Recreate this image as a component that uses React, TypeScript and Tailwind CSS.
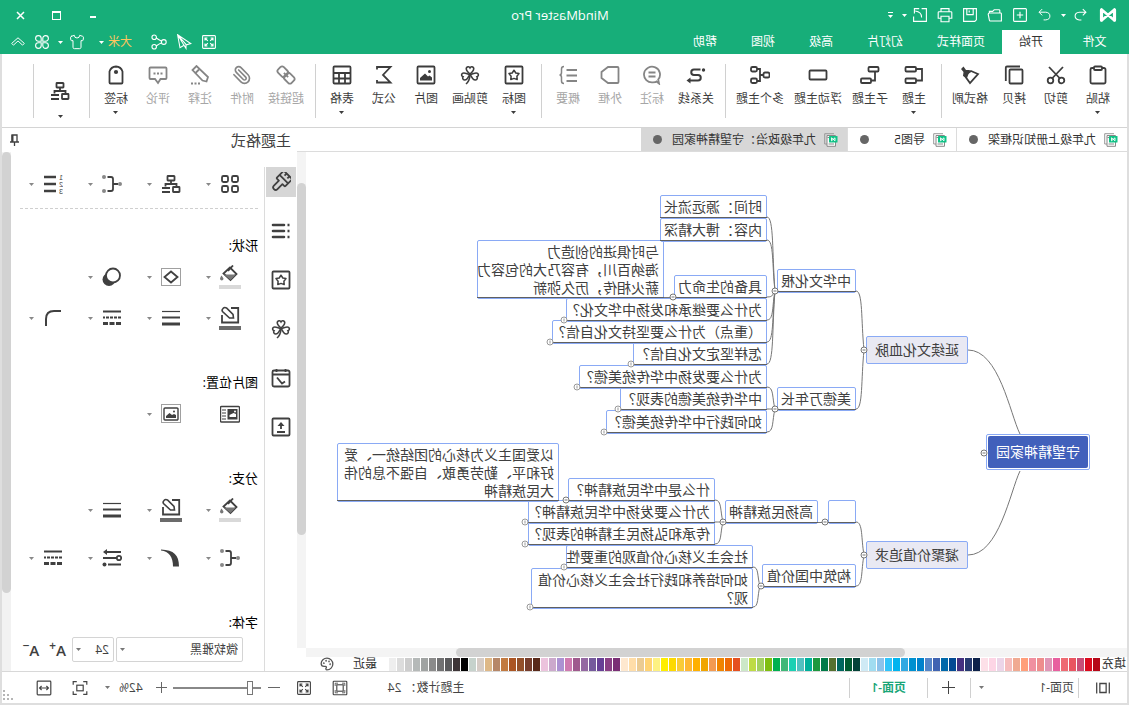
import React from 'react';
import { Palette, Paperclip, Shirt } from 'lucide-react';

interface SvgProps {
  children: React.ReactNode;
  size?: number;
  stroke?: number;
}

const Svg: React.FC<SvgProps> = ({ children, size = 20, stroke = 1.8 }) => (
  <svg
    width={size}
    height={size}
    viewBox="0 0 20 20"
    fill="none"
    stroke="currentColor"
    strokeWidth={stroke}
    className="shrink-0"
    aria-hidden="true"
  >
    {children}
  </svg>
);

const Caret: React.FC<{ className?: string }> = ({ className = '' }) => (
  <svg width="5" height="3" viewBox="0 0 5 3" className={`shrink-0 ${className}`} aria-hidden="true">
    <path d="M0 0H5L2.5 3Z" fill="currentColor" />
  </svg>
);

const star = 'M10 5.2L11.8 8L15 8.600L12.900 11.200L13.200 14.600L10 13.400L6.800 14.600L7.100 11.200L5 8.600L8.200 8Z';

const cloverShape = (
  <g strokeWidth="1.6">
    <path d="M10 9C7 6.500 5.500 4.500 6.500 2.700C7.500 1.200 9.300 1.500 10 2.800C10.700 1.500 12.500 1.200 13.500 2.700C14.500 4.500 13 6.500 10 9Z" />
    <path d="M9.500 9.500C6 8 3.500 7.200 2.200 8.500C1 10 1.800 11.500 3 11.800C2.200 13 2.800 14.800 4.500 15C6.700 15 8.300 13 9.500 9.500Z" />
    <path d="M10.500 9.500C14 8 16.500 7.200 17.800 8.500C19 10 18.200 11.500 17 11.800C17.800 13 17.200 14.800 15.500 15C13.300 15 11.700 13 10.500 9.500Z" />
    <path d="M10 10C10.300 14 11.500 17 14 19" />
  </g>
);

const treeShape = (
  <>
    <rect x="6.500" y="2" width="7" height="4.500" rx="0.500" />
    <path d="M10 6.500V10M4.500 13V10H15.500V12.500" />
    <rect x="1.500" y="13" width="6.500" height="5" rx="0.500" />
    <path d="M11 14H19M11 18H19" />
  </>
);

const bracketShape = (
  <>
    <path d="M4 10H9M14.500 3H11Q9 3 9 5V15Q9 17 11 17H14.500" />
    <g fill="#888" stroke="none">
      <circle cx="2" cy="10" r="2" />
      <circle cx="18" cy="3" r="2" />
      <circle cx="18" cy="17" r="2" />
    </g>
  </>
);

const imageShape = (
  <>
    <rect x="1.500" y="1.500" width="17" height="17" rx="1" />
    <path d="M4 15.500V12.500L6.500 10.500L8 11.500L11 8.500L16 13V15.500Z" fill="currentColor" stroke="none" />
    <circle cx="6.500" cy="6.500" r="1.500" fill="currentColor" stroke="none" />
  </>
);

const bucketShape = (
  <>
    <path d="M10 2.500L16.500 8.500L9.500 15L3.500 9Z" />
    <path d="M4 9.500H16L9.500 15Z" fill="#777" stroke="none" />
    <path d="M12 6L7 .5" />
    <path d="M18.500 10.500C19.500 12 20 13 20 14A1.800 1.800 0 0 1 16.500 14C16.500 13 17.500 12 18.500 10.500Z" fill="#777" stroke="none" />
  </>
);

const penBoxShape = (
  <>
    <path d="M9 2H1.800V16.500H18V9" />
    <path d="M6.500 12L7 8.500L13.500 2Q15.500 .8 17 2.500Q18.500 4 17.500 5.500L10.500 12Z" strokeWidth="1.600" />
  </>
);

const dashesShape = (
  <>
    <path d="M1 3.500H19" strokeWidth="2" />
    <path d="M1 9.500H19" strokeWidth="2" strokeDasharray="3 1" />
    <path d="M1 15.500H19" strokeWidth="3" strokeDasharray="5 1.500" />
  </>
);

const weightsShape = (
  <>
    <path d="M1 3.500H19" strokeWidth="1.200" />
    <path d="M1 9.500H19" strokeWidth="2" />
    <path d="M1 16H19" strokeWidth="3" />
  </>
);

const expandShape = (
  <>
    <rect x="2" y="2" width="16" height="16" rx="1" />
    <path d="M5 8V5H8M5 5L8.500 8.500M15 8V5H12M15 5L11.500 8.500M5 12V15H8M5 15L8.500 11.500M15 12V15H12M15 15L11.500 11.500" />
  </>
);

const icons: Record<string, React.ReactNode> = {
  paste: (
    <>
      <rect x="2.500" y="3" width="15" height="15.500" rx="1.500" />
      <rect x="6" y="1.500" width="8" height="3.500" rx="1" fill="#fff" />
    </>
  ),
  cut: (
    <>
      <circle cx="4.500" cy="15.500" r="2.800" />
      <circle cx="15.500" cy="15.500" r="2.800" />
      <path d="M3 2L14 13.500M17 2L6 13.500" />
    </>
  ),
  copy: (
    <>
      <rect x="1.500" y="4.500" width="13" height="14" rx="1" />
      <path d="M4 1.500H17Q18.200 1.500 18.200 2.700V16" />
    </>
  ),
  brush: (
    <>
      <path d="M9 6L2 9L10 18L15.500 10.500Z" />
      <path d="M10 5L14 5L16.500 1.500L19 4L16.500 7L17 11L13 13Z" fill="currentColor" stroke="none" />
    </>
  ),
  topic: (
    <>
      <rect x="8" y="2" width="10.500" height="4.500" rx="1" />
      <rect x="8" y="13.500" width="10.500" height="4.500" rx="1" />
      <path d="M8 4H2V15.500H8" />
    </>
  ),
  subtopic: (
    <>
      <rect x="1.500" y="2" width="10" height="4.500" rx="1" />
      <rect x="9" y="13.500" width="10" height="4.500" rx="1" />
      <path d="M5 6.500V15.500H9" />
    </>
  ),
  floating: <rect x="1.500" y="5.500" width="17" height="9" rx="1" />,
  multi: (
    <>
      <rect x="0.500" y="7.500" width="6" height="5" rx="1.500" />
      <rect x="13" y="2" width="6" height="4.500" rx="1.500" />
      <rect x="13" y="13.500" width="6" height="4.500" rx="1.500" />
      <path d="M6.500 10H10M13 4H10V16H13" />
    </>
  ),
  relation: (
    <>
      <path d="M5.500 4.500H12A2.700 2.700 0 0 1 12 10H8A2.700 2.700 0 0 0 8 15.500H16" strokeWidth="2" />
      <circle cx="2.500" cy="5" r="1.700" fill="currentColor" stroke="none" />
      <path d="M15.500 12.500L19.500 15.500L15.500 18.500Z" fill="currentColor" stroke="none" />
    </>
  ),
  callout: (
    <>
      <path d="M3 18.500L3.800 14.500A8 7.800 0 1 1 9 17.300Q6 17.300 5.500 16.500Z" />
      <path d="M6.500 7.500H13.500M6.500 11.500H13.500" />
    </>
  ),
  frame: <path d="M2.500 2H12L18.500 7V13L12 18H2.500Q1.500 18 1.500 17V3Q1.500 2 2.500 2Z" />,
  summary: (
    <>
      <path d="M1 5H11.500M1 10.500H11.500M1 16H11.500" />
      <path d="M14 1.500Q16.500 1.500 16.500 4V7.500Q16.500 10 18.500 10Q16.500 10 16.500 12.500V16Q16.500 18.500 14 18.500" strokeWidth="1.500" />
    </>
  ),
  mark: (
    <>
      <rect x="1.500" y="1.500" width="17" height="17" rx="1" />
      <path d={star} strokeWidth="1.500" strokeLinejoin="round" />
    </>
  ),
  clover: cloverShape,
  image: imageShape,
  sigma: <path d="M17 4.500V2H3.500L11 10L3.500 17.500H17V15" />,
  table: (
    <>
      <rect x="1.500" y="1.500" width="17" height="17" rx="1" />
      <path d="M1.500 8H18.500M1.500 13.500H18.500M7 8V18.500M13 8V18.500" />
    </>
  ),
  link: (
    <g transform="rotate(45 10 10)">
      <rect x="6" y="0.500" width="8" height="10" rx="2.500" />
      <rect x="6" y="9.500" width="8" height="10" rx="2.500" />
      <path d="M10 7V13" />
    </g>
  ),
  note: (
    <>
      <path d="M2 13L3.500 17.500L7.500 16.500L17.500 6L13.500 2Z" transform="translate(0 -1)" />
      <path d="M11 4.500L15 8.500" />
      <path d="M10 18.500H19" strokeDasharray="2 1.500" />
    </>
  ),
  comment: (
    <>
      <path d="M2.500 2.500H17.500Q18.500 2.500 18.500 3.500V13Q18.500 14 17.500 14H13L10 18L7.500 14H2.500Q1.500 14 1.500 13V3.500Q1.500 2.500 2.500 2.500Z" />
      <path d="M5.500 8.500H15" strokeDasharray="2 1.500" />
    </>
  ),
  tag: (
    <>
      <path d="M3.500 17.500V6.500Q5 1.800 10 1.500Q15 1.800 16.500 6.500V17.500Q16.500 18.500 15.500 18.500H4.500Q3.500 18.500 3.500 17.500Z" />
      <circle cx="10" cy="7" r="2.100" fill="currentColor" stroke="none" />
    </>
  ),
  tree: treeShape,
  grid: (
    <>
      <rect x="2" y="2" width="6" height="6" rx="1.500" />
      <rect x="12" y="2" width="6" height="6" rx="1.500" />
      <rect x="2" y="12" width="6" height="6" rx="1.500" />
      <rect x="12" y="12" width="6" height="6" rx="1.500" />
    </>
  ),
  bracket: bracketShape,
  numbering: (
    <>
      <path d="M7 3H19M7 10H19M7 17H19" strokeWidth="2.600" />
      <g fill="currentColor" stroke="none" fontSize="7" fontFamily="Liberation Sans">
        <text x="0" y="6">1</text>
        <text x="0" y="13">2</text>
        <text x="0" y="20">3</text>
      </g>
    </>
  ),
  bucket: bucketShape,
  diamond: (
    <>
      <rect x="0.500" y="1.500" width="19" height="17" strokeWidth="1" strokeDasharray="1 1" />
      <path d="M10 4.500L16.500 10L10 15.500L3.500 10Z" />
    </>
  ),
  shadow: (
    <>
      <circle cx="13" cy="12.500" r="6.500" fill="currentColor" stroke="none" />
      <circle cx="9" cy="8.500" r="7" fill="#fff" />
    </>
  ),
  penBox: penBoxShape,
  weights: weightsShape,
  dashes: dashesShape,
  corner: <path d="M2 3H9Q17 3 17 11V18" strokeWidth="2" />,
  textImage: (
    <>
      <rect x="0.500" y="2.500" width="19" height="15.500" rx="1" strokeWidth="1.400" />
      <rect x="2.500" y="5" width="10" height="10.500" fill="currentColor" stroke="none" />
      <path d="M4 13V10L6.500 9L10.500 11V13Z" fill="#fff" stroke="none" />
      <circle cx="5" cy="7.500" r="1" fill="#fff" stroke="none" />
      <path d="M14 6H18M14 9H18M14 12H18M14 15H18" strokeWidth="1.100" />
    </>
  ),
  dottedImage: (
    <>
      <rect x="0.500" y="0.500" width="19" height="18" strokeWidth="1" strokeDasharray="1 1" />
      <rect x="3" y="4" width="14" height="12" rx="1" strokeWidth="1.400" />
      <path d="M5 14V11L7 10L9 11L11.500 9L15 12V14Z" fill="currentColor" stroke="none" />
      <circle cx="7" cy="7.500" r="1" fill="currentColor" stroke="none" />
    </>
  ),
  taper: <path d="M20 1.500C7 2 2 7 2 18.500H8C8 9 12 3.500 20 2.500Z" fill="currentColor" stroke="none" />,
  arrows: (
    <>
      <path d="M1 4H16M5 10H19M1 16.500H14" strokeWidth="2" />
      <path d="M15 1L19 4L15 7Z" fill="currentColor" stroke="none" />
      <circle cx="3" cy="10" r="2.200" />
      <circle cx="17.500" cy="16.500" r="2" fill="currentColor" stroke="none" />
    </>
  ),
  format: (
    <g transform="rotate(-45 10 10)" strokeLinejoin="round">
      <path d="M4 0H16V9.500Q16 10.500 15 10.500H12.500V17.500Q12.500 20 10 20Q7.500 20 7.500 17.500V10.500H5Q4 10.500 4 9.500Z" />
      <path d="M4 6H16M8 0V3M12 0V3" />
    </g>
  ),
  outline: (
    <>
      <path d="M7 4H18M7 10H18M7 16H18" strokeWidth="2.600" strokeLinecap="round" />
      <path d="M1.500 4H3.500M1.500 10H3.500M1.500 16H3.500" strokeWidth="2.400" />
    </>
  ),
  task: (
    <>
      <rect x="1.500" y="2.500" width="17" height="16" rx="1.500" />
      <path d="M1.500 6.500H18.500M5.500 1V4M14.500 1V4M6 13.500L9 15.500L14 9.500" />
    </>
  ),
  upload: (
    <>
      <rect x="1.500" y="1.500" width="17" height="17" rx="1" />
      <path d="M10 12V6M6 15H14" />
      <path d="M6.500 9L10 5L13.500 9Z" fill="currentColor" stroke="none" />
    </>
  ),
  undo: <path d="M6 1.500L1.500 6L6 10.500M1.500 6H11Q17 6.500 17 11.500Q17 16.500 11 17H8" />,
  redo: <path d="M14 1.500L18.500 6L14 10.500M18.500 6H9Q3 6.500 3 11.500Q3 16.500 9 17H12" />,
  add: (
    <>
      <rect x="2" y="2" width="16" height="16" rx="1" />
      <path d="M10 6V14M6 10H14" />
    </>
  ),
  open: <path d="M2 17.500V8.500Q2 7.500 3 7.500H17Q18.500 7.500 18.500 9L17 16.500Q16.800 17.500 16 17.500H2ZM4 7.500V4.500Q4 3.500 5 3.500H11L13 5.500H17V7.500" />,
  save: <path d="M2 2H18V18H4L2 16ZM6 2V9.500H14V2M11 4.500V7" />,
  print: <path d="M5 6V2H15V6M5 14H1.500V7Q1.500 6 2.500 6H17.500Q18.500 6 18.500 7V14H15M5 11.500H15V18.500H5Z" />,
  share: <path d="M8 2H2V18H18V12M8 13Q8 6 16 5M11 2H17V8" />,
  nodes: (
    <>
      <circle cx="4" cy="10" r="3" />
      <circle cx="16" cy="4" r="2.800" />
      <circle cx="16" cy="16" r="2.800" />
      <path d="M6.500 9Q10 7.500 13.500 5M6.500 11Q10 12.500 13.500 15" />
    </>
  ),
  send: <path d="M18 1L1.500 12L7 13.500L18 1L15 17L10 14L7.500 18V13.500M18 1L10 14" />,
  expand: expandShape,
  fourLeaf: (
    <path d="M9 9H5.500A3.500 3.500 0 1 1 9 5.500ZM11 9V5.500A3.500 3.500 0 1 1 14.500 9ZM9 11V14.500A3.500 3.500 0 1 1 5.500 11ZM11 11H14.500A3.500 3.500 0 1 1 11 14.500Z" />
  ),
  collapse: <path d="M1 12L10 4L19 12L16.500 14.500L10 8.500L3.500 14.500Z" />,
  page: <path d="M3 4V16M17 4V16M6.500 5H13.500V15H6.500Z" />,
  fitFrame: (
    <>
      <rect x="1.500" y="1.500" width="17" height="17" rx="1" />
      <rect x="6" y="6" width="8" height="8" />
      <path d="M4 7.500V4H7.500M12.500 4H16V7.500M16 12.500V16H12.500M7.500 16H4V12.500" strokeWidth="1" />
    </>
  ),
  fitPage: (
    <>
      <rect x="6" y="6.500" width="8" height="7" />
      <path d="M1.500 6V2H6M14 2H18.500V6M18.500 14V18H14M6 18H1.500V14" />
    </>
  ),
  fitWidth: (
    <>
      <rect x="1.500" y="1.500" width="17" height="17" rx="1" />
      <path d="M4.500 10H15.500M7 7.500L4.500 10L7 12.500M13 7.500L15.500 10L13 12.500" />
    </>
  ),
};

const Logo = () => (
  <svg width="18" height="16" viewBox="0 0 18 16" fill="none" stroke="#fff" aria-hidden="true">
    <path d="M2.500 2.500V13.500L15.500 2.500V13.500Z" strokeWidth="2.600" strokeLinejoin="round" />
    <path d="M2.500 3V13M15.500 3V13" strokeWidth="3.200" strokeLinecap="round" />
  </svg>
);

const DocIcon = () => (
  <svg width="14" height="14" viewBox="0 0 14 14" fill="none" className="shrink-0" aria-hidden="true">
    <path d="M4 .7H13.300V11H11" stroke="#999" />
    <path d="M2.500 2.500H11V13.300H2.500Z" fill="#fff" stroke="#888" />
    <path d="M4 11H9.500M9 4.500H10.500" stroke="#888" />
    <rect x="0.500" y="3" width="8.500" height="6.500" rx="0.500" fill="#10c286" />
    <path d="M3 4.800V7.800L6.500 4.800V7.800Z" stroke="#fff" strokeWidth="0.900" />
  </svg>
);

const menus = ['页面样式', '幻灯片', '高级', '视图', '帮助'];
const quickActions = [
  ['redo', '重做'],
  ['add', '新建'],
  ['open', '打开'],
  ['save', '保存'],
  ['print', '打印'],
  ['share', '导出'],
];

const TitleBar = () => (
  <header className="bg-[#17ae79] text-white">
    <div className="flex h-[30px] items-center">
      <div className="flex flex-1 items-center pl-3">
        <span className="w-[27px]">
          <Logo />
        </span>
        <button className="flex w-5 justify-center" aria-label="撤销">
          <Svg size={14} stroke={1.5}>{icons.undo}</Svg>
        </button>
        <button className="flex w-3 justify-center" aria-label="撤销选项">
          <Caret />
        </button>
        {quickActions.map(([icon, label]) => (
          <button key={icon} className="flex w-[25px] justify-center" aria-label={label}>
            <Svg size={icon === 'redo' ? 14 : 16} stroke={1.4}>{icons[icon]}</Svg>
          </button>
        ))}
        <button className="flex w-[7px] justify-center" aria-label="导出选项">
          <Caret />
        </button>
        <button className="ml-2 flex flex-col items-center gap-[2px]" aria-label="自定义">
          <span className="h-px w-[5px] bg-white" />
          <Caret />
        </button>
      </div>
      <h1 className="text-[13px] leading-4">MindMaster Pro</h1>
      <div className="flex flex-1 justify-end pr-[3px]">
        <button className="flex h-6 w-9 items-center justify-center" aria-label="最小化">
          <span className="mt-1 h-[2px] w-[6px] bg-white" />
        </button>
        <button className="flex h-6 w-9 items-center justify-center" aria-label="最大化">
          <span className="h-[9px] w-[9px] border border-t-2 border-white" />
        </button>
        <button className="flex h-6 w-9 items-center justify-center" aria-label="关闭">
          <svg width="9" height="9" viewBox="0 0 9 9" stroke="#fff" strokeWidth="1.500">
            <path d="M1 1L8 8M8 1L1 8" />
          </svg>
        </button>
      </div>
    </div>
    <div className="flex h-6 items-center">
      <nav className="flex flex-1 self-stretch text-xs">
        <button className="w-[69px]">文件</button>
        <button className="bg-white px-[17px] text-[#333]">开始</button>
        {menus.map((menu) => (
          <button key={menu} className="px-[17px]">
            {menu}
          </button>
        ))}
      </nav>
      <div className="flex items-center pr-[11px] text-xs">
        <button className="flex w-[25px] justify-center" aria-label="全屏">
          <Svg size={16} stroke={1.4}>{icons.expand}</Svg>
        </button>
        <button className="flex w-[25px] justify-center" aria-label="发送">
          <Svg size={16} stroke={1.3}>{icons.send}</Svg>
        </button>
        <button className="mr-[14px] flex w-[25px] justify-center" aria-label="分享">
          <Svg size={16} stroke={1.4}>{icons.nodes}</Svg>
        </button>
        <button className="flex items-center gap-1 text-[#fcc55f]">
          大米
          <Caret className="text-white" />
        </button>
        <button className="ml-[14px] flex items-center gap-[6px]" aria-label="主题">
          <Shirt size={16} strokeWidth={1.5} />
          <Caret />
        </button>
        <button className="ml-2 mr-[9px]" aria-label="应用">
          <Svg size={16} stroke={1.4}>{icons.fourLeaf}</Svg>
        </button>
        <button aria-label="收起功能区">
          <Svg size={14} stroke={1.4}>{icons.collapse}</Svg>
        </button>
      </div>
    </div>
  </header>
);

interface Tool {
  icon: string;
  label: string;
  menu?: boolean;
  disabled?: boolean;
}

const toolGroups: Tool[][] = [
  [
    { icon: 'paste', label: '粘贴', menu: true },
    { icon: 'cut', label: '剪切' },
    { icon: 'copy', label: '拷贝' },
    { icon: 'brush', label: '格式刷' },
  ],
  [
    { icon: 'topic', label: '主题', menu: true },
    { icon: 'subtopic', label: '子主题' },
    { icon: 'floating', label: '浮动主题' },
    { icon: 'multi', label: '多个主题' },
  ],
  [
    { icon: 'relation', label: '关系线' },
    { icon: 'callout', label: '标注', disabled: true },
    { icon: 'frame', label: '外框', disabled: true },
    { icon: 'summary', label: '概要', disabled: true },
  ],
  [
    { icon: 'mark', label: '图标', menu: true },
    { icon: 'clover', label: '剪贴画' },
    { icon: 'image', label: '图片' },
    { icon: 'sigma', label: '公式' },
    { icon: 'table', label: '表格', menu: true },
  ],
  [
    { icon: 'link', label: '超链接', disabled: true },
    { icon: 'clip', label: '附件', disabled: true },
    { icon: 'note', label: '注释', disabled: true },
    { icon: 'comment', label: '评论', disabled: true },
    { icon: 'tag', label: '标签', menu: true },
  ],
];

const Ribbon = () => (
  <div className="flex h-[74px] border-b border-[#d4d4d4] pl-2 text-xs leading-4 text-[#3c3c3c]">
    {toolGroups.map((tools, i) => (
      <div key={i} className="flex">
        {tools.map((tool) => (
          <button
            key={tool.label}
            disabled={tool.disabled}
            className="flex min-w-[42px] flex-col items-center px-[5px] pt-[11px] disabled:text-[#858585]"
          >
            {tool.icon === 'clip' ? <Paperclip size={20} strokeWidth={2} /> : <Svg>{icons[tool.icon]}</Svg>}
            <span className={tool.disabled ? 'mt-[6px] text-[#a6a6a6]' : 'mt-[6px]'}>{tool.label}</span>
            {tool.menu && <Caret className="mt-1" />}
          </button>
        ))}
        <span className="ml-[5px] mr-[6px] mt-[10px] h-[54px] w-px bg-[#d0d0d0]" />
      </div>
    ))}
    <button className="flex w-[45px] flex-col items-center pt-[27px]" aria-label="布局">
      <Svg>{icons.tree}</Svg>
      <Caret className="mt-[14px]" />
    </button>
    <span className="ml-1 mt-[10px] h-[54px] w-px bg-[#d0d0d0]" />
  </div>
);

const tabs = [
  { title: '九年级上册知识框架', active: false },
  { title: '导图5', active: false },
  { title: '九年级政治：守望精神家园', active: true },
];

const DocTabs = () => (
  <div className="flex h-6 border-b border-[#dcdcdc] text-xs text-[#333]">
    {tabs.map(({ title, active }) => (
      <button
        key={title}
        className={
          active
            ? 'flex items-center bg-[#d7d7d7] pl-[9px] pr-3'
            : 'flex min-w-[109px] items-center border-r border-[#dcdcdc] pl-[9px] pr-3'
        }
      >
        <DocIcon />
        <span className="ml-2 mr-[10px]">{title}</span>
        <span className="ml-auto h-[9px] w-[9px] rounded-full bg-[#666]" />
      </button>
    ))}
  </div>
);

interface MapNode {
  x: number;
  y: number;
  w: number;
  h?: number;
  text: string;
}

const leafNodes: MapNode[] = [
  { x: 271, y: 117, w: 79, text: '中华文化根' },
  { x: 271, y: 235, w: 79, text: '美德万年长' },
  { x: 271, y: 348, w: 28, text: '' },
  { x: 309, y: 348, w: 93, text: '高扬民族精神' },
  { x: 271, y: 412, w: 94, text: '构筑中国价值' },
  { x: 360, y: 43, w: 107, text: '时间：源远流长' },
  { x: 360, y: 66, w: 107, text: '内容：博大精深' },
  { x: 360, y: 123, w: 93, text: '具备的生命力' },
  { x: 360, y: 146, w: 201, text: '为什么要继承和发扬中华文化？' },
  { x: 360, y: 168, w: 215, text: '（重点）为什么要坚持文化自信？' },
  { x: 360, y: 190, w: 134, text: '怎样坚定文化自信？' },
  { x: 360, y: 213, w: 188, text: '为什么要发扬中华传统美德？' },
  { x: 360, y: 235, w: 147, text: '中华传统美德的表现？' },
  { x: 360, y: 258, w: 161, text: '如何践行中华传统美德？' },
  { x: 412, y: 326, w: 147, text: '什么是中华民族精神？' },
  { x: 412, y: 348, w: 187, text: '为什么要发扬中华民族精神？' },
  { x: 412, y: 370, w: 187, text: '传承和弘扬民主精神的表现？' },
  { x: 374, y: 393, w: 187, text: '社会主义核心价值观的重要性' },
  { x: 463, y: 88, w: 187, h: 59, text: '与时俱进的创造力\n海纳百川，有容乃大的包容力\n薪火相传，历久弥新' },
  { x: 568, y: 291, w: 222, h: 59, text: '以爱国主义为核心的团结统一、爱\n好和平、勤劳勇敢、自强不息的伟\n大民族精神' },
  { x: 374, y: 416, w: 222, h: 41, text: '如何培养和践行社会主义核心价值\n观？' },
];

// parent anchor followed by the y of every child underline
const branches = [
  { from: [263, 198], to: 271, ys: [139, 257] },
  { from: [263, 403], to: 271, ys: [370, 434] },
  { from: [352, 139], to: 360, ys: [65, 88, 145, 168, 190, 212] },
  { from: [352, 257], to: 360, ys: [235, 257, 280] },
  { from: [404, 370], to: 412, ys: [348, 370, 392] },
  { from: [367, 434], to: 374, ys: [415, 455] },
];

const openDots = [[143, 301], [263, 198], [263, 403], [352, 139], [352, 257], [454, 145], [302, 370], [404, 370], [561, 348], [366, 434]];
const countDots = [[563, 168], [577, 190], [496, 212], [550, 235], [509, 257], [523, 280], [602, 370], [602, 392], [563, 415], [597, 455]];

const MindMap = () => (
  <div className="relative min-h-[480px] flex-1 overflow-hidden text-sm text-[#404040]">
    <svg className="absolute left-0 top-0" width="823" height="480" fill="none" stroke="#777" aria-hidden="true">
      <path d="M107 282C117 262 128 198 159 198M107 319C117 340 128 403 159 403" />
      {branches.map(({ from: [x, y], to, ys }) =>
        ys.map((cy) => <path key={`${x}-${cy}`} d={`M${x} ${y}C${x + 3} ${y + (cy - y) / 2} ${x + 1} ${cy} ${to} ${cy}`} />)
      )}
      <path d="M299 370.500H309M453 145.500H463M559 348.500H568" />
    </svg>
    <div className="absolute left-[37px] top-[282px] rounded-xs border border-[#8aaaf5] p-px">
      <div className="rounded-xs bg-[#4160bb] px-2 py-[7px] leading-[18px] text-white">守望精神家园</div>
    </div>
    <div className="absolute left-[159px] top-[184px] rounded-xs border border-[#8aaaf5] bg-[#e9e9f3] px-2 py-1 leading-[18px]">延续文化血脉</div>
    <div className="absolute left-[159px] top-[389px] rounded-xs border border-[#8aaaf5] bg-[#e9e9f3] px-2 py-1 leading-[18px]">凝聚价值追求</div>
    {leafNodes.map(({ x, y, w, h = 24, text }) => (
      <div
        key={`${x}-${y}`}
        className="absolute whitespace-pre rounded-xs border border-[#8aaaf5] pl-1 pt-[2px] leading-[18px]"
        style={{ left: x, top: y, width: w, height: h }}
      >
        {text}
      </div>
    ))}
    <svg className="absolute left-0 top-0" width="823" height="480" fill="#fff" stroke="#777" aria-hidden="true">
      {leafNodes.map(({ x, y, w, h = 24 }) => (
        <path key={`${x}-${y}`} stroke="#606060" d={`M${x} ${y + h - 1.5}h${w}`} />
      ))}
      {openDots.map(([x, y]) => (
        <g key={`${x}-${y}`}>
          <circle cx={x} cy={y} r="3" />
          <path d={`M${x - 1.5} ${y}h3`} />
        </g>
      ))}
      {countDots.map(([x, y]) => (
        <g key={`${x}-${y}`} stroke="#999">
          <circle cx={x} cy={y} r="3" />
          <path d={`M${x} ${y - 1.5}v3`} />
        </g>
      ))}
    </svg>
  </div>
);

const swatches = [
  '#b50718', '#dc0a1e', '#c84f78', '#e95561', '#ee6a72', '#e8609f', '#e096b6', '#ee8d8d', '#f090a0', '#ff9e7a',
  '#f0aa92', '#f6bdbd', '#ecd5e8', '#fdd5e5', '#fde0e8', '#0d2149', '#263a70', '#443080', '#034a93', '#0068aa',
  '#4064b2', '#5585c8', '#0082cc', '#0090d0', '#30a9e2', '#00b4ef', '#30c4fa', '#8cc2ea', '#a0dcf0', '#cfeaf5',
  '#044238', '#005a30', '#00665e', '#56702f', '#007a48', '#1d983f', '#00b09b', '#52c0c0', '#1cd0b3', '#3fb878',
  '#00b050', '#80be10', '#a2d060', '#bedb45', '#cce8c8', '#e54f20', '#ee6a05', '#f08400', '#f39a52', '#f0a500',
  '#ffb000', '#ffb733', '#f9cb38', '#fdd900', '#ffee00', '#fdf182', '#ffd373', '#ebcb92', '#ffdda8', '#fee8cf',
  '#7a2f75', '#8a4085', '#674096', '#755a9c', '#9468a2', '#9f5a8d', '#cf7bb0', '#ac92d2', '#cba9cc', '#ecc3dd',
  '#58291a', '#763d2c', '#93502a', '#ab5523', '#c27a40', '#b68768', '#deb887', '#d6ccc6', '#c6d2cc', '#000000',
  '#3d3537', '#5a5a5c', '#717172', '#8b8b8b', '#a0a3a2', '#b5b9b8', '#cdcdcd', '#dcdcdc', '#eeeeee',
];

const ColorBar = () => (
  <div className="flex h-[14px] items-center text-xs leading-[14px] text-[#333]">
    <span className="w-[27px] shrink-0 pl-px">填充</span>
    <div className="flex gap-px">
      {swatches.map((color) => (
        <button key={color} aria-label={color} className="h-[13px] w-[7px]" style={{ backgroundColor: color }} />
      ))}
    </div>
    <span className="ml-3 shrink-0">最近</span>
    <button className="ml-[19px] shrink-0 text-[#555]" aria-label="更多颜色">
      <Palette size={14} strokeWidth={2.2} />
    </button>
  </div>
);

const sideTabs = [
  ['format', '主题格式'],
  ['outline', '大纲'],
  ['mark', '图标'],
  ['clover', '剪贴画'],
  ['task', '任务'],
  ['upload', '上传'],
];

interface PanelItem {
  icon: string;
  label: string;
  bar?: 'light' | 'dark';
  plain?: boolean;
}

const PanelRow: React.FC<{ items: PanelItem[]; className: string }> = ({ items, className }) => (
  <div className={`flex h-6 pl-[22px] ${className}`}>
    {items.map(({ icon, label, bar, plain }) => (
      <button key={label} aria-label={label} className="flex w-[59px] shrink-0 items-center gap-[7px] last:w-auto">
        <span className="flex w-6 flex-col items-center">
          <Svg>{icons[icon]}</Svg>
          {bar && <span className={bar === 'light' ? 'h-1 w-[22px] bg-[#d9d9d9]' : 'h-1 w-[22px] bg-[#6b6b6b]'} />}
        </span>
        {!plain && <Caret className="text-[#888]" />}
      </button>
    ))}
  </div>
);

const FormatPanel = () => (
  <aside className="flex w-[295px] shrink-0 flex-col text-[#404040]">
    <div className="flex h-6 items-center justify-between pl-[6px] pr-[7px]">
      <h2 className="text-[15px] leading-5">主题格式</h2>
      <button aria-label="固定面板">
        <svg width="11" height="12" viewBox="0 0 11 12" fill="none" stroke="currentColor">
          <path d="M3 8V1H8V8M1 8H10M5.500 8V12" strokeWidth="1.300" />
          <path d="M7.500 1V8" strokeWidth="2" />
        </svg>
      </button>
    </div>
    <div className="flex flex-1">
      <nav className="mt-[15px] flex w-[33px] shrink-0 flex-col gap-[19px] border-r border-[#dcdcdc] px-px">
        {sideTabs.map(([icon, label], i) => (
          <button
            key={icon}
            aria-label={label}
            className={i === 0 ? 'flex h-[30px] items-center justify-center bg-[#d6d6d6]' : 'flex h-[30px] items-center justify-center'}
          >
            <Svg>{icons[icon]}</Svg>
          </button>
        ))}
      </nav>
      <div className="min-w-0 flex-1 text-[13px] leading-4">
        <PanelRow
          className="mt-5"
          items={[
            { icon: 'grid', label: '布局' },
            { icon: 'tree', label: '结构' },
            { icon: 'bracket', label: '连线' },
            { icon: 'numbering', label: '编号' },
          ]}
        />
        <div className="ml-[6px] mr-[9px] mt-3 border-t border-dashed border-[#cfcfcf]" />
        <h3 className="ml-[6px] mt-7 text-black">形状:</h3>
        <PanelRow
          className="mt-3"
          items={[
            { icon: 'bucket', label: '形状填充', bar: 'light' },
            { icon: 'diamond', label: '形状' },
            { icon: 'shadow', label: '阴影' },
          ]}
        />
        <PanelRow
          className="mt-[17px]"
          items={[
            { icon: 'penBox', label: '边框颜色', bar: 'dark' },
            { icon: 'weights', label: '边框粗细' },
            { icon: 'dashes', label: '边框线型' },
            { icon: 'corner', label: '圆角' },
          ]}
        />
        <h3 className="ml-[6px] mt-11 text-black">图片位置:</h3>
        <PanelRow
          className="mt-3"
          items={[
            { icon: 'textImage', label: '图片位置', plain: true },
            { icon: 'dottedImage', label: '图片大小' },
          ]}
        />
        <h3 className="ml-[6px] mt-11 text-black">分支:</h3>
        <PanelRow
          className="mt-3"
          items={[
            { icon: 'bucket', label: '分支填充', bar: 'light' },
            { icon: 'penBox', label: '线条颜色', bar: 'dark' },
            { icon: 'weights', label: '线条粗细' },
          ]}
        />
        <PanelRow
          className="mt-6"
          items={[
            { icon: 'bracket', label: '分支样式' },
            { icon: 'taper', label: '分支形状' },
            { icon: 'arrows', label: '箭头' },
            { icon: 'dashes', label: '线条线型' },
          ]}
        />
        <h3 className="ml-[6px] mt-11 text-black">字体:</h3>
        <div className="mt-[7px] flex items-center gap-[2px] pl-[21px] text-xs">
          <div className="relative">
            <select aria-label="字体" className="h-[25px] w-[127px] appearance-none rounded-xs border border-[#d4d4d4] pl-1">
              <option>微软雅黑</option>
            </select>
            <Caret className="pointer-events-none absolute right-1 top-[11px] text-[#777]" />
          </div>
          <div className="relative">
            <select aria-label="字号" className="h-[25px] w-[42px] appearance-none rounded-xs border border-[#d4d4d4] pl-1">
              <option>24</option>
            </select>
            <Caret className="pointer-events-none absolute right-1 top-[11px] text-[#777]" />
          </div>
          <button className="ml-1 flex text-[15px] font-semibold leading-5" aria-label="增大字号">
            A<span className="text-xs leading-3">+</span>
          </button>
          <button className="ml-2 flex text-[15px] font-semibold leading-5" aria-label="减小字号">
            A<span className="text-xs leading-3">−</span>
          </button>
        </div>
      </div>
      <div className="flex w-[9px] shrink-0 flex-col bg-[#f2f2f2]">
        <div className="h-[85%] rounded-full bg-[#d2d2d2]" />
      </div>
    </div>
  </aside>
);

const StatusBar = () => (
  <footer className="flex h-8 items-center border-t border-[#d8d8d8] text-xs text-[#444]">
    <button className="flex w-12 justify-center" aria-label="页面面板">
      <Svg size={18} stroke={1.4}>{icons.page}</Svg>
    </button>
    <button className="flex h-5 w-[109px] items-center justify-between border-x border-[#d0d0d0] pl-1 pr-2">
      页面-1
      <Caret className="text-[#777]" />
    </button>
    <button className="flex w-[42px] justify-center" aria-label="新增页面">
      <svg width="13" height="13" viewBox="0 0 13 13" stroke="#444">
        <path d="M6.500 0V13M0 6.500H13" />
      </svg>
    </button>
    <button className="h-5 border-x border-l-[#d0d0d0] border-r-[#d0d0d0] px-[21px] font-semibold text-[#19a577]">页面-1</button>
    <div className="ml-auto flex items-center">
      <span className="mr-10">主题计数： 24</span>
      <button aria-label="适应画布">
        <Svg size={16} stroke={1.4}>{icons.fitFrame}</Svg>
      </button>
      <button className="ml-5" aria-label="全屏">
        <Svg size={16} stroke={1.4}>{icons.expand}</Svg>
      </button>
      <button className="ml-4 flex h-4 w-3 items-center" aria-label="缩小">
        <span className="h-px w-full bg-[#666]" />
      </button>
      <input
        type="range"
        aria-label="缩放"
        min={0}
        max={100}
        defaultValue={9}
        className="ml-[7px] h-4 w-[88px] appearance-none bg-transparent [&::-webkit-slider-runnable-track]:h-[2px] [&::-webkit-slider-runnable-track]:bg-[#888] [&::-webkit-slider-thumb]:-mt-[6px] [&::-webkit-slider-thumb]:h-[14px] [&::-webkit-slider-thumb]:w-[6px] [&::-webkit-slider-thumb]:appearance-none [&::-webkit-slider-thumb]:border [&::-webkit-slider-thumb]:border-[#777] [&::-webkit-slider-thumb]:bg-white"
      />
      <button className="ml-[6px]" aria-label="放大">
        <svg width="11" height="11" viewBox="0 0 11 11" stroke="#666">
          <path d="M5.500 0V11M0 5.500H11" />
        </svg>
      </button>
      <button className="ml-[13px] flex items-center gap-[9px]">
        42%
        <Caret className="text-[#777]" />
      </button>
      <button className="ml-[17px]" aria-label="适应页面">
        <Svg size={16} stroke={1.5}>{icons.fitPage}</Svg>
      </button>
      <button className="ml-5" aria-label="适应宽度">
        <Svg size={16} stroke={1.5}>{icons.fitWidth}</Svg>
      </button>
      <svg width="12" height="12" viewBox="0 0 12 12" fill="#b5b5b5" className="ml-[22px] mt-4" aria-hidden="true">
        <path d="M9 0h2v2h-2zM9 4h2v2h-2zM5 4h2v2h-2zM9 8h2v2h-2zM5 8h2v2h-2zM1 8h2v2h-2z" />
      </svg>
    </div>
  </footer>
);

// The whole window is flipped horizontally
const App: React.FC = () => {
  return (
    <div className="flex min-h-screen -scale-x-100 flex-col bg-white font-['Open_Sans','Noto_Sans_CJK_SC',sans-serif]">
      <TitleBar />
      <div className="flex flex-1 flex-col border-x-2 border-b-2 border-[#dedede]">
        <Ribbon />
        <div className="flex flex-1">
          <main className="flex min-w-0 flex-1 flex-col">
            <DocTabs />
            <div className="flex flex-1">
              <div className="flex flex-1 flex-col">
                <MindMap />
                <div className="h-[9px] bg-[#f4f4f4] pl-[27%]">
                  <div className="h-full w-3/4 rounded-full bg-[#d2d2d2]" />
                </div>
              </div>
              <div className="mb-[9px] w-[9px] bg-[#f4f4f4] pt-[31px]">
                <div className="h-[352px] rounded-full bg-[#d2d2d2]" />
              </div>
            </div>
            <ColorBar />
          </main>
          <FormatPanel />
        </div>
        <StatusBar />
      </div>
    </div>
  );
};

export default App;
